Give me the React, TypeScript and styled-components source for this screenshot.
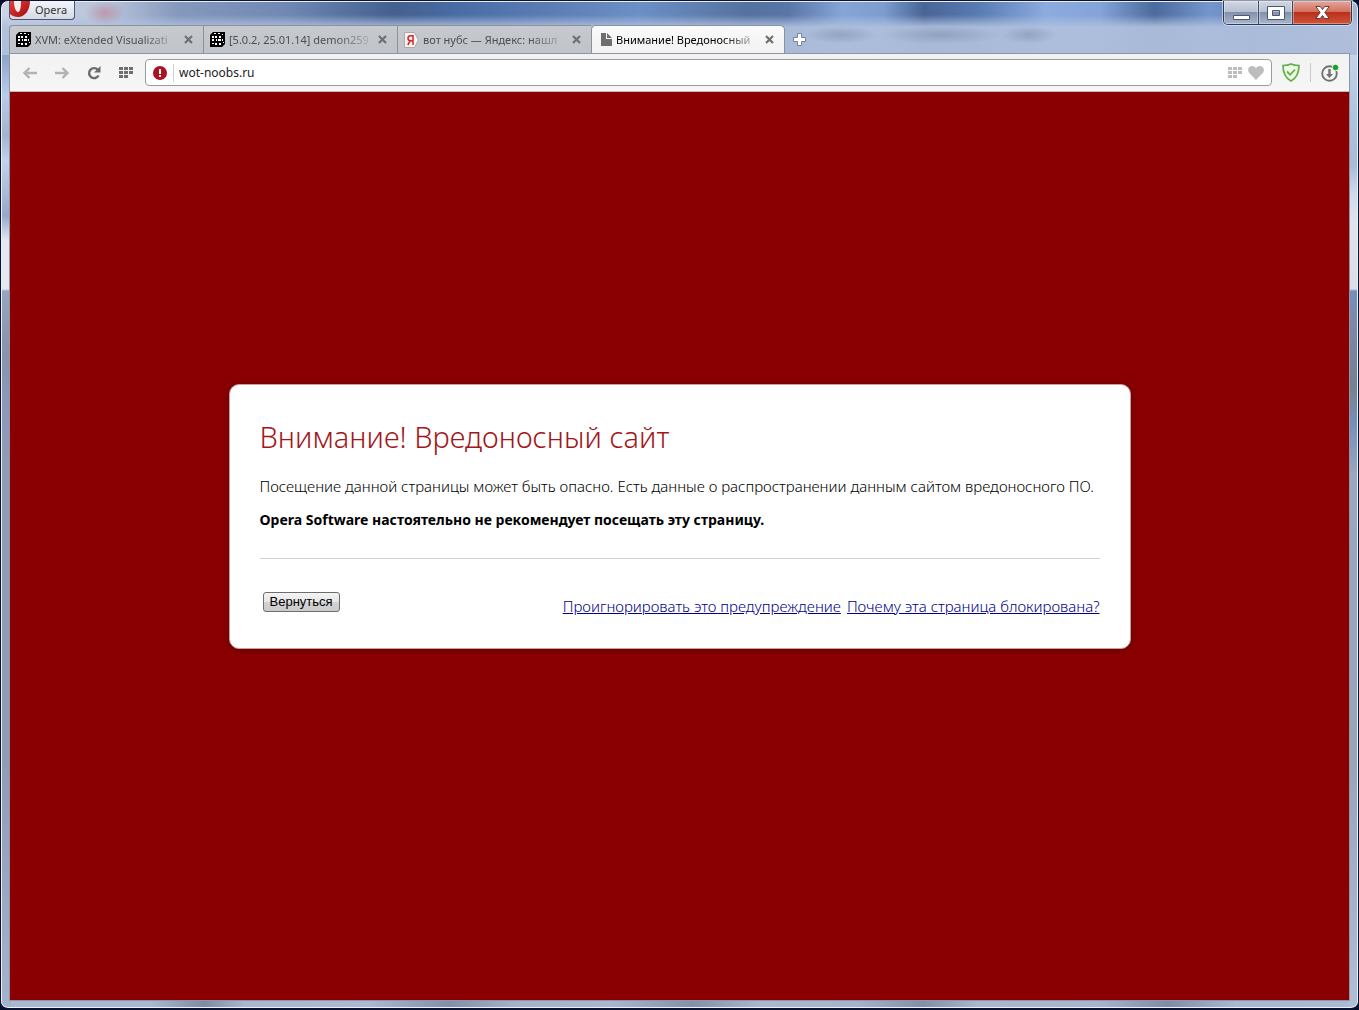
import React from "react";
import styled, { createGlobalStyle, css } from "styled-components";

const GlobalStyle = createGlobalStyle`
  *, *::before, *::after { box-sizing: border-box; }
  body {
    margin: 0;
    background: #060f2c;
    font-family: "Noto Sans", "Open Sans", sans-serif;
    color: #000;
  }
  button { font-family: inherit; padding: 0; border: 0; background: none; }
  svg { display: block; flex: none; }
`;

const Window = styled.div`
  display: flex;
  flex-direction: column;
  min-height: 100vh;
  padding: 0 8px 7px;
  border: 1px solid #0a1430;
  border-bottom-width: 2px;
  border-radius: 8px;
  box-shadow: inset 0 0 0 1px #e9f0fa;
  background:
    radial-gradient(36px 9px at 840px 34px, rgba(110, 125, 155, 0.4), transparent),
    radial-gradient(60px 9px at 940px 34px, rgba(110, 125, 155, 0.4), transparent),
    radial-gradient(28px 9px at 1028px 34px, rgba(110, 125, 155, 0.4), transparent),
    radial-gradient(20px 12px at 104px 12px, rgba(190, 110, 130, 0.5), transparent),
    linear-gradient(180deg, #8fa3c8 0, #b9cbea 40px, #a3b4d0 80px, #c0d2ec 106px, #97a9c9 161px, #e4e9f2 186px, #e4e9f0 234px, #97a5bf 236px, #8794aa 296px, #8b98ba 346px, #909bb6 406px, #909cb5 70%, #a9b8d2 100%)
      left 0 top 54px / 10px 100% no-repeat,
    linear-gradient(180deg, #c3d3e9 0, #aec3de 60px, #a9bcd6 110px, #cfdcec 140px, #dfe4ec 170px, #d8dde6 234px, #7590bd 236px, #7d88a8 270px, #73828f 330px, #7890ba 370px, #98a8bd 420px, #96a5b8 70%, #b4c4da 100%)
      right 0 top 54px / 10px 100% no-repeat,
    linear-gradient(90deg, #a9b8d2 0, #aab9d2 11%, #7f8ba3 15%, #aab8cf 18%, #acb9d2 27%, #838fa8 33%, #a6b2c9 38%, #a9b6cf 45%, #8390a8 51%, #a9b7cf 56%, #a6b3cc 63%, #838fa7 68%, #a9b7cf 72%, #a7b4cd 81%, #7f8ca6 86%, #aab9d2 91%, #a9bad6 100%)
      left 0 bottom 0 / 100% 12px no-repeat,
    linear-gradient(180deg, rgba(176, 192, 222, 0) 0, rgba(176, 192, 222, 0) 14px, rgba(176, 192, 222, 0.92) 26px, rgba(174, 190, 218, 0.95) 100%)
      left 0 top 0 / 100% 54px no-repeat,
    linear-gradient(90deg, #cdd5e4 0, #b7c3d9 8%, #8599bd 13%, #7088b4 21%, #43608f 29%, #4a6da6 34%, #5b7cb3 40%, #6c8fc6 47%, #54729f 55%, #5876a6 58%, #85a5d8 62%, #7d9dd0 65%, #486595 68%, #587bb2 72%, #8cabdf 77%, #84a3d8 81%, #4b6a9d 85%, #7496cc 89%, #6484b8 92%, #7e93b8 96%, #a5b6d3 100%)
      left 0 top 0 / 100% 54px no-repeat,
    #a2b0ca;
`;

const TitleBar = styled.header`
  display: flex;
  justify-content: space-between;
  align-items: flex-start;
  height: 24px;
  flex: none;
`;

const OperaMenu = styled.button`
  display: flex;
  align-items: center;
  gap: 5px;
  height: 19px;
  padding-right: 7px;
  border: 1px solid #4c5870;
  border-top: 0;
  border-radius: 0 0 4px 4px;
  background: linear-gradient(#f3f5f9, #d5dae5);
  font-size: 11px;
  line-height: 20px;
  color: #333;
  overflow: hidden;
`;

const WindowControls = styled.div`
  display: flex;
  height: 24px;
  margin-right: -2px;
  border: 1px solid #2e3a52;
  border-top: 0;
  border-radius: 0 0 5px 5px;
  overflow: hidden;
  box-shadow: 0 0 0 1px rgba(235, 240, 250, 0.6);
`;

const ControlButton = styled.button<{ $width: number; $close?: boolean }>`
  display: flex;
  align-items: center;
  justify-content: center;
  width: ${(p) => p.$width}px;
  background: linear-gradient(#d3d9e4 0, #b4bfd0 48%, #8290aa 50%, #a9b7cd 100%);
  box-shadow: inset 0 0 0 1px rgba(255, 255, 255, 0.35);
  & + & { border-left: 1px solid #3f4b63; }
  ${(p) =>
    p.$close &&
    css`
      background: linear-gradient(#e2a79b 0, #d3705d 46%, #b9301b 50%, #d0533a 100%);
    `}
`;

const TabStrip = styled.nav`
  display: flex;
  align-items: stretch;
  height: 28px;
  flex: none;
`;

const Tab = styled.div<{ $active?: boolean }>`
  display: flex;
  align-items: center;
  gap: 8px;
  width: 194px;
  padding: 0 10px 0 6px;
  border: 1px solid #8b929c;
  border-width: 1px 0 0 1px;
  background: linear-gradient(#c6cacf, #c0c3c7);
  color: #4c4f54;
  &:first-child { border-top-left-radius: 4px; }
  ${(p) =>
    p.$active &&
    css`
      padding-left: 9px;
      border-right-width: 1px;
      border-radius: 5px 5px 0 0;
      background: linear-gradient(#fafafb, #f2f2f3);
      color: #000;
    `}
`;

const TabLabel = styled.button`
  display: flex;
  align-items: center;
  gap: 4px;
  flex: 1;
  min-width: 0;
  color: inherit;
  font-size: 11px;
  line-height: 20px;
`;

const TabTitle = styled.span`
  flex: 1;
  min-width: 0;
  white-space: nowrap;
  text-align: left;
  mask-image: linear-gradient(90deg, #000 calc(100% - 34px), rgba(0, 0, 0, 0.15));
`;

const IconButton = styled.button`
  display: flex;
  align-items: center;
  justify-content: center;
  flex: none;
`;

const NewTab = styled(IconButton)`
  width: 28px;
`;

const Browser = styled.div`
  display: flex;
  flex-direction: column;
  flex: 1;
  border: 1px solid #8d96a5;
`;

const Toolbar = styled.div`
  display: flex;
  align-items: center;
  height: 38px;
  flex: none;
  padding: 0 10px 0 4px;
  border-bottom: 1px solid #c9b9b5;
  background: linear-gradient(#f2f2f3, #f6f6f6);
`;

const ToolButton = styled(IconButton)`
  width: 32px;
  height: 28px;
`;

const AddressBar = styled.div`
  display: flex;
  align-items: center;
  flex: 1;
  height: 27px;
  margin: 0 10px 0 3px;
  padding: 0 7px;
  gap: 6px;
  border: 1px solid #9b9b9b;
  border-radius: 4px;
  background: #fff;
`;

const AddressInput = styled.input`
  flex: 1;
  min-width: 0;
  padding: 0 0 0 5px;
  border: 0;
  border-left: 1px solid #d0d0d0;
  outline: 0;
  background: none;
  font-family: inherit;
  font-size: 12px;
  line-height: 18px;
  color: #222;
`;

const Divider = styled.span`
  width: 1px;
  height: 19px;
  margin: 0 10px;
  background: #c9c9c9;
`;

const Page = styled.main`
  display: flex;
  flex: 1;
  align-items: center;
  justify-content: center;
  padding: 0 16px 60px;
  background: #8a0002;
`;

const Card = styled.section`
  width: 100%;
  max-width: 902px;
  padding: 32px 30px 30px;
  border: 1px solid #c9a09c;
  border-radius: 10px;
  background: #fff;
  box-shadow: 0 1px 6px rgba(50, 0, 0, 0.5);
`;

const Heading = styled.h1`
  margin: 0 0 17px;
  font-size: 29px;
  line-height: 40px;
  font-weight: 300;
  color: #a3161b;
`;

const Text = styled.p<{ $strong?: boolean }>`
  margin: 0 0 10px;
  font-size: ${(p) => (p.$strong ? 14 : 15)}px;
  line-height: 24px;
  font-weight: ${(p) => (p.$strong ? 700 : 300)};
`;

const Actions = styled.div`
  display: flex;
  align-items: flex-start;
  justify-content: space-between;
  flex-wrap: wrap;
  margin-top: 26px;
  padding: 33px 0 0 3px;
  border-top: 1px solid #cfcfcf;
`;

const BackButton = styled.button`
  height: 20px;
  padding: 0 6px;
  border: 1px solid #6e6e6e;
  border-radius: 3px;
  background: linear-gradient(#f4f4f4 0, #e6e6e8 48%, #d2d2d5 52%, #cbcbce 100%);
  font-family: "Liberation Sans", Arial, sans-serif;
  font-size: 13px;
  line-height: 18px;
`;

const Links = styled.div`
  display: flex;
  flex-wrap: wrap;
  gap: 6px;
  padding-top: 2px;
`;

const Link = styled.a`
  font-size: 15px;
  line-height: 24px;
  font-weight: 300;
  color: #00008b;
`;

const DiceIcon = () => (
  <svg width="15" height="15" viewBox="0 0 15 15">
    <path d="M3 0h12v12l-3 3H0V3z" fill="#000" />
    <path
      d="M4 1h2v1H4zM8 1h2v1H8zM12 2h1v1h-1zM2 4h2v2H2zM5 4h2v2H5zM9 4h2v2H9zM2 7h2v2H2zM6 7h1v2H6zM8 7h3v2H8zM12 7h1v2h-1zM2 11h2v1H2zM5 11h2v2H5zM9 11h2v2H9zM13 10h1v1h-1z"
      fill="#fff"
    />
  </svg>
);

const YandexIcon = () => (
  <svg width="15" height="16" viewBox="0 0 15 16">
    <path d="M.5.5h10l4 7.500-4 7.500H.5z" fill="#f5f3f2" stroke="#aaa" />
    <path d="M9 3v10M9 3.700H6.500a2.300 2.300 0 0 0 0 5H9M6.300 8.700 3.800 13" fill="none" stroke="#d8232a" strokeWidth="1.500" />
  </svg>
);

const PageIcon = () => (
  <svg width="11" height="13" viewBox="0 0 11 13">
    <path d="M0 0h5v6h6v7H0z" fill="#6f6f6f" />
    <path d="M6 0v5h5z" fill="#6f6f6f" />
  </svg>
);

const CloseIcon = () => (
  <svg width="9" height="9" viewBox="0 0 9 9">
    <path d="m1 1 7 7M8 1 1 8" stroke="#6e7074" strokeWidth="2.200" />
  </svg>
);

const ArrowIcon = ({ forward }: { forward?: boolean }) => (
  <svg width="14" height="12" viewBox="0 0 14 12">
    <path
      d={forward ? "M0 6h12M7.500 1l5 5-5 5" : "M14 6H2M6.500 1l-5 5 5 5"}
      fill="none"
      stroke="#b3b3b3"
      strokeWidth="2.400"
    />
  </svg>
);

const ReloadIcon = () => (
  <svg width="14" height="14" viewBox="0 0 14 14">
    <path d="M11.500 9.500A5 5 0 1 1 10.800 3.800" fill="none" stroke="#6c6c6c" strokeWidth="2.400" />
    <path d="M13.500 0v6.500H7z" fill="#6c6c6c" />
  </svg>
);

const GridIcon = ({ color }: { color: string }) => (
  <svg width="14" height="11" viewBox="0 0 14 11">
    <path
      d="M0 0h4v3H0zM5 0h4v3H5zM10 0h4v3h-4zM0 4h4v3H0zM5 4h4v3H5zM10 4h4v3h-4zM0 8h4v3H0zM5 8h4v3H5z"
      fill={color}
    />
  </svg>
);

const AlertIcon = () => (
  <svg width="14" height="14" viewBox="0 0 14 14">
    <circle cx="7" cy="7" r="7" fill="#ad1220" />
    <path d="M6 3h2v5H6zM6 9h2v2H6z" fill="#fff" />
  </svg>
);

const HeartIcon = () => (
  <svg width="16" height="14" viewBox="0 0 16 14">
    <path d="M8 14 1.400 7.300C-.5 5.200-.2 2.200 1.600.9 3.700-.7 6.700.1 8 2.400 9.300.1 12.300-.7 14.400.9c1.800 1.300 2.100 4.300.2 6.400z" fill="#bdbdbd" />
  </svg>
);

const ShieldIcon = () => (
  <svg width="18" height="19" viewBox="0 0 18 19">
    <path d="M9 1c2.500 1.200 5 1.500 8 1.500 0 7-1.500 12-8 15.500C2.500 14.500 1 9.500 1 2.500 4 2.500 6.500 2.200 9 1z" fill="#edfbe4" stroke="#66ad4d" strokeWidth="1.700" />
    <path d="m5 8.500 3.200 3.300L13 6.500" fill="none" stroke="#66ad4d" strokeWidth="1.800" />
  </svg>
);

const DownloadIcon = () => (
  <svg width="18" height="18" viewBox="0 0 18 18">
    <circle cx="8.500" cy="9.500" r="7.300" fill="none" stroke="#717171" strokeWidth="1.900" />
    <path d="M7.300 5h2.400v5H12l-3.500 4L5 10h2.300z" fill="#717171" />
    <circle cx="14.500" cy="3.500" r="3.300" fill="#1ba32b" stroke="#f5f5f5" />
  </svg>
);

const PlusIcon = () => (
  <svg width="13" height="13" viewBox="0 0 13 13">
    <path d="M4.500.5h4v4h4v4h-4v4h-4v-4h-4v-4h4z" fill="#fff" stroke="#76849c" />
  </svg>
);

const OperaLogo = () => (
  <svg width="20" height="19" viewBox="0 0 20 19">
    <defs>
      <linearGradient id="opera-red" x1="0" y1="0" x2="1" y2="1">
        <stop offset="0" stopColor="#ee3b35" />
        <stop offset="1" stopColor="#9c0b12" />
      </linearGradient>
    </defs>
    <path d="M0 0h20c0 9-5 16-12 16-3 0-6-1-8-3z" fill="url(#opera-red)" />
    <path d="M4 0h7c0 7-1 11-3 11S4 7 4 0z" fill="#f3eeee" />
  </svg>
);

const MinimizeIcon = () => (
  <svg width="17" height="14" viewBox="0 0 17 14">
    <path d="M.5 9.500h16v4H.5z" fill="#fff" stroke="#4c5870" />
  </svg>
);

const MaximizeIcon = () => (
  <svg width="18" height="14" viewBox="0 0 18 14">
    <path d="M.5.5h17v13H.5zM5.500 4.500v5h7v-5z" fill="#fff" fillRule="evenodd" stroke="#4c5870" />
  </svg>
);

const WindowCloseIcon = () => (
  <svg width="15" height="13" viewBox="0 0 15 13">
    <path d="M.8.500h4.500l2.200 3 2.200-3h4.500L9.900 6.500l4.300 6H9.700l-2.200-3-2.200 3H.8l4.300-6z" fill="#fff" stroke="#6b3a3a" />
  </svg>
);

const tabs = [
  { title: "XVM: eXtended Visualizati", icon: <DiceIcon /> },
  { title: "[5.0.2, 25.01.14] demon259", icon: <DiceIcon /> },
  { title: "вот нубс — Яндекс: нашл", icon: <YandexIcon /> },
  { title: "Внимание! Вредоносный", icon: <PageIcon />, active: true },
];

export default function App() {
  return (
    <>
      <GlobalStyle />
      <Window>
        <TitleBar>
          <OperaMenu>
            <OperaLogo />
            Opera
          </OperaMenu>
          <WindowControls>
            <ControlButton $width={34} aria-label="Свернуть">
              <MinimizeIcon />
            </ControlButton>
            <ControlButton $width={34} aria-label="Развернуть">
              <MaximizeIcon />
            </ControlButton>
            <ControlButton $width={59} $close aria-label="Закрыть">
              <WindowCloseIcon />
            </ControlButton>
          </WindowControls>
        </TitleBar>
        <TabStrip aria-label="Вкладки">
          {tabs.map((tab) => (
            <Tab key={tab.title} $active={tab.active}>
              <TabLabel>
                {tab.icon}
                <TabTitle>{tab.title}</TabTitle>
              </TabLabel>
              <IconButton aria-label="Закрыть вкладку">
                <CloseIcon />
              </IconButton>
            </Tab>
          ))}
          <NewTab aria-label="Новая вкладка">
            <PlusIcon />
          </NewTab>
        </TabStrip>
        <Browser>
          <Toolbar>
            <ToolButton aria-label="Назад">
              <ArrowIcon />
            </ToolButton>
            <ToolButton aria-label="Вперёд">
              <ArrowIcon forward />
            </ToolButton>
            <ToolButton aria-label="Обновить">
              <ReloadIcon />
            </ToolButton>
            <ToolButton aria-label="Экспресс-панель">
              <GridIcon color="#6f6f6f" />
            </ToolButton>
            <AddressBar>
              <AlertIcon />
              <AddressInput aria-label="Адрес" defaultValue="wot-noobs.ru" />
              <IconButton aria-label="Добавить на экспресс-панель">
                <GridIcon color="#bdbdbd" />
              </IconButton>
              <IconButton aria-label="Добавить в копилку">
                <HeartIcon />
              </IconButton>
            </AddressBar>
            <IconButton aria-label="Защита">
              <ShieldIcon />
            </IconButton>
            <Divider />
            <IconButton aria-label="Загрузки">
              <DownloadIcon />
            </IconButton>
          </Toolbar>
          <Page>
            <Card>
              <Heading>Внимание! Вредоносный сайт</Heading>
              <Text>
                Посещение данной страницы может быть опасно. Есть данные о распространении данным сайтом вредоносного ПО.
              </Text>
              <Text $strong>Opera Software настоятельно не рекомендует посещать эту страницу.</Text>
              <Actions>
                <BackButton>Вернуться</BackButton>
                <Links>
                  <Link href="#ignore">Проигнорировать это предупреждение</Link>
                  <Link href="#why">Почему эта страница блокирована?</Link>
                </Links>
              </Actions>
            </Card>
          </Page>
        </Browser>
      </Window>
    </>
  );
}
